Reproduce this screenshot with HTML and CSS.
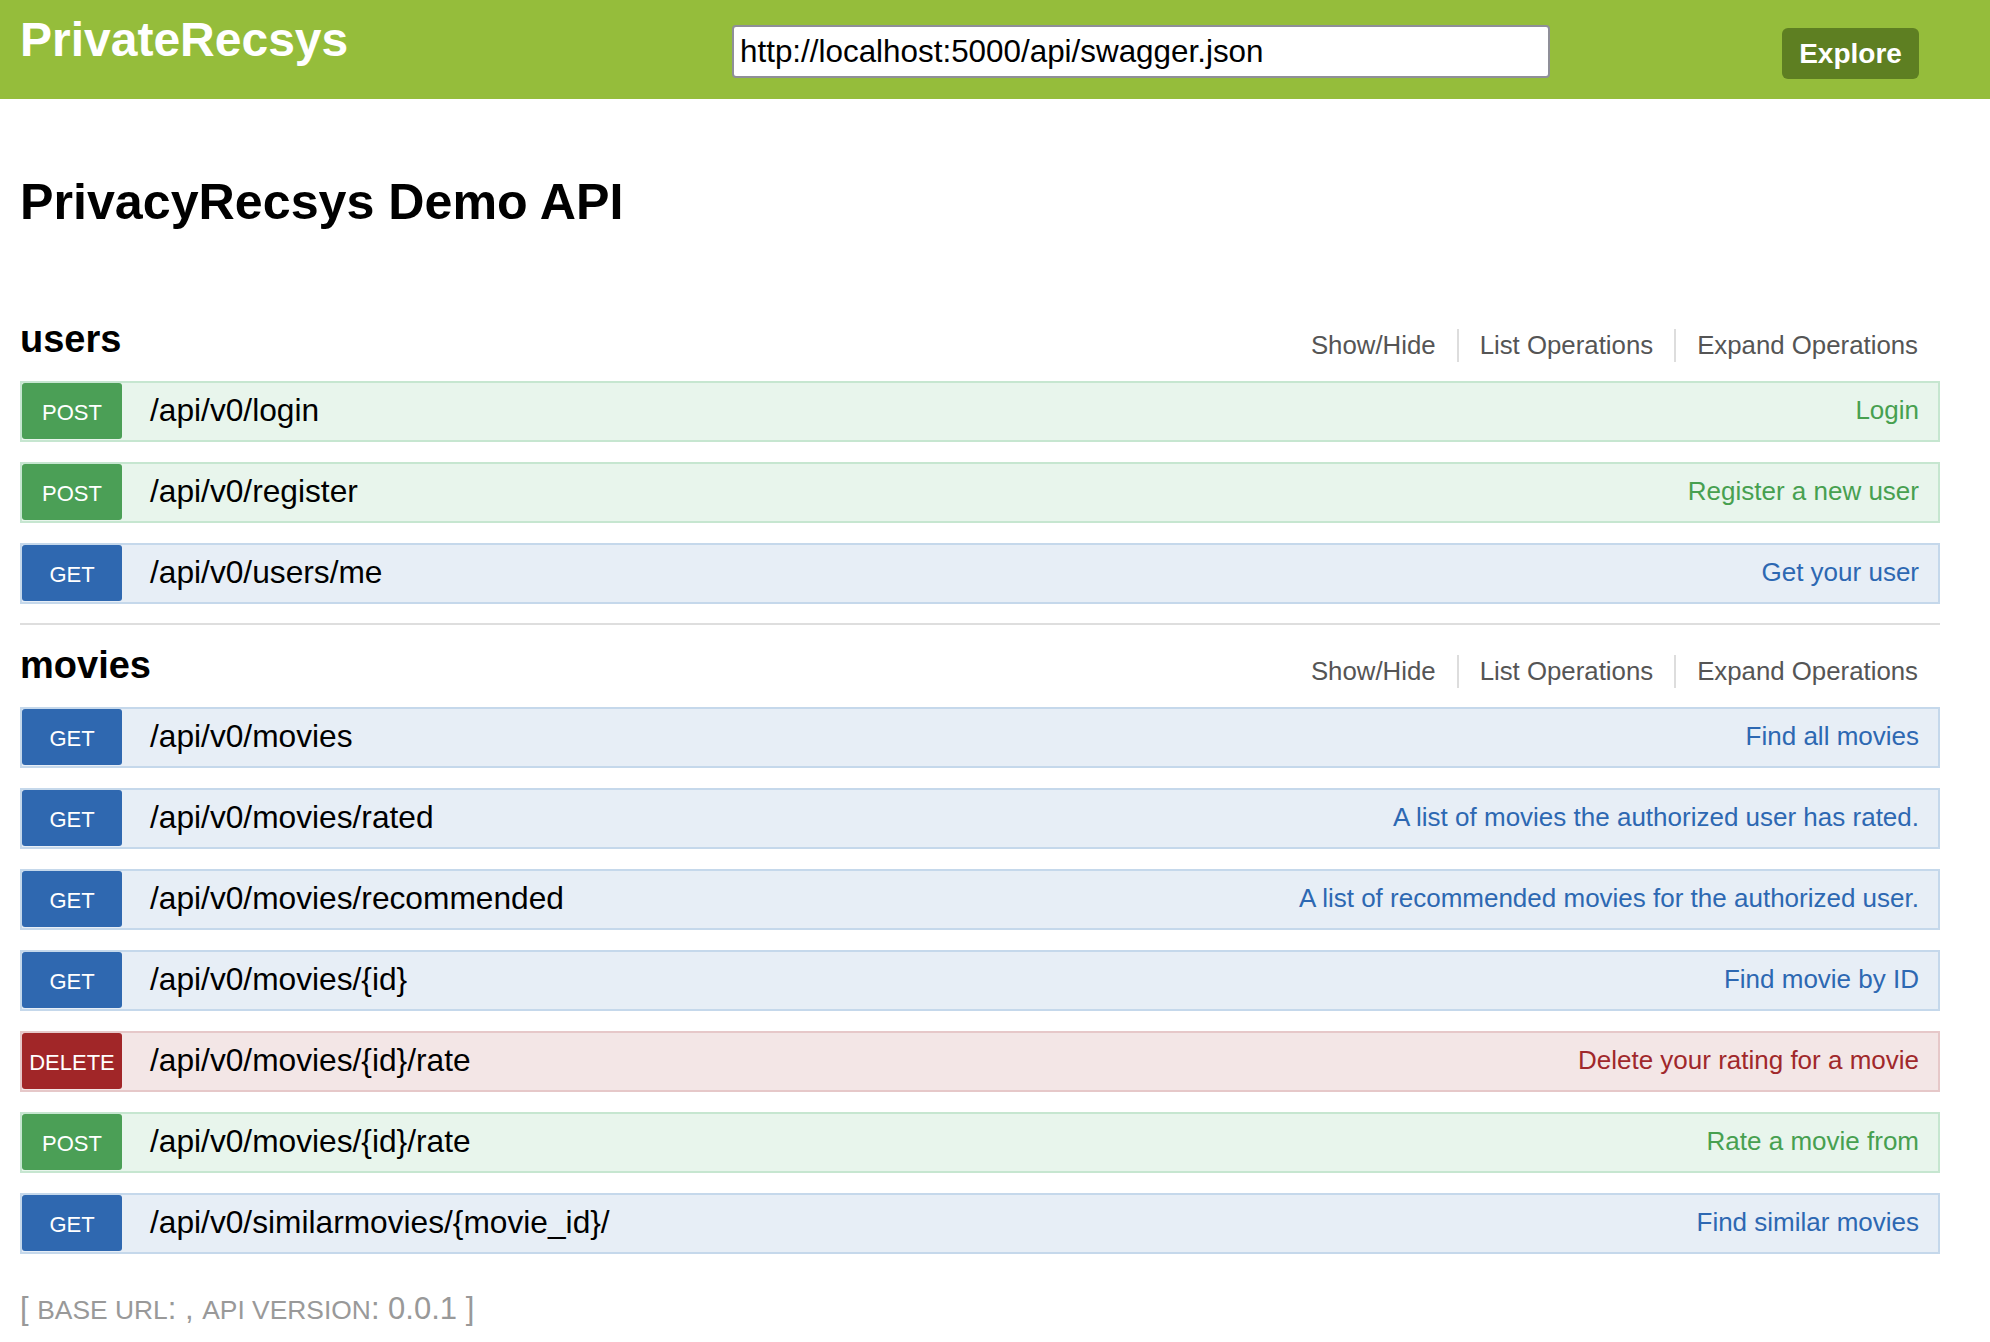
FILE: index.html
```html
<!DOCTYPE html>
<html lang="en">
<head>
<meta charset="utf-8">
<title>PrivacyRecsys Demo API</title>
<link rel="stylesheet" href="styles.css">
</head>
<body>
<header class="topbar">
  <div class="topbar-inner">
    <a class="logo">PrivateRecsys</a>
    <form class="api-selector">
      <input class="api-url" type="text" value="http://localhost:5000/api/swagger.json">
      <a class="explore">Explore</a>
    </form>
  </div>
</header>
<main class="wrap">
  <h1 class="api-title">PrivacyRecsys Demo API</h1>

  <section class="resource">
    <div class="resource-head">
      <h2 class="resource-name">users</h2>
      <ul class="options">
        <li>Show/Hide</li>
        <li>List Operations</li>
        <li>Expand Operations</li>
      </ul>
    </div>
    <ul class="ops">
      <li class="op post"><span class="method">POST</span><span class="path">/api/v0/login</span><span class="summary">Login</span></li>
      <li class="op post"><span class="method">POST</span><span class="path">/api/v0/register</span><span class="summary">Register a new user</span></li>
      <li class="op get"><span class="method">GET</span><span class="path">/api/v0/users/me</span><span class="summary">Get your user</span></li>
    </ul>
  </section>

  <section class="resource">
    <div class="resource-head">
      <h2 class="resource-name">movies</h2>
      <ul class="options">
        <li>Show/Hide</li>
        <li>List Operations</li>
        <li>Expand Operations</li>
      </ul>
    </div>
    <ul class="ops">
      <li class="op get"><span class="method">GET</span><span class="path">/api/v0/movies</span><span class="summary">Find all movies</span></li>
      <li class="op get"><span class="method">GET</span><span class="path">/api/v0/movies/rated</span><span class="summary">A list of movies the authorized user has rated.</span></li>
      <li class="op get"><span class="method">GET</span><span class="path">/api/v0/movies/recommended</span><span class="summary">A list of recommended movies for the authorized user.</span></li>
      <li class="op get"><span class="method">GET</span><span class="path">/api/v0/movies/{id}</span><span class="summary">Find movie by ID</span></li>
      <li class="op delete"><span class="method">DELETE</span><span class="path">/api/v0/movies/{id}/rate</span><span class="summary">Delete your rating for a movie</span></li>
      <li class="op post"><span class="method">POST</span><span class="path">/api/v0/movies/{id}/rate</span><span class="summary">Rate a movie from</span></li>
      <li class="op get"><span class="method">GET</span><span class="path">/api/v0/similarmovies/{movie_id}/</span><span class="summary">Find similar movies</span></li>
    </ul>
  </section>

  <h4 class="footer">[ <span class="sc">base url</span>: , <span class="sc">api version</span>: 0.0.1 ]</h4>
</main>
</body>
</html>
```
FILE: styles.css
```css
* { box-sizing: border-box; }

body {
  margin: 0;
  font-family: "Liberation Sans", Arial, Helvetica, sans-serif;
  color: #000;
  background: #fff;
}

/* ---------- top bar ---------- */
.topbar {
  background: #95bd3b;
  height: 99px;
}
.topbar-inner {
  margin-left: 20px;
  width: 1920px;
  display: flex;
  align-items: flex-start;
}
.logo {
  margin-top: 16px;
  font-size: 48px;
  line-height: 48px;
  font-weight: bold;
  color: #fff;
}
.api-selector {
  margin: 0 0 0 auto;
  display: flex;
  align-items: flex-start;
}
.api-url {
  margin-top: 25px;
  width: 818px;
  height: 53px;
  border: 2px solid #8f8f98;
  border-radius: 4px;
  padding: 0 6px;
  font-family: "Liberation Sans", Arial, sans-serif;
  font-size: 31.4px;
  color: #000;
  background: #fff;
}
.explore {
  margin-top: 28px;
  margin-left: 232px;
  margin-right: 21px;
  width: 137px;
  height: 51px;
  background: #5e7f22;
  border-radius: 6px;
  color: #fff;
  font-weight: bold;
  font-size: 28px;
  display: flex;
  align-items: center;
  justify-content: center;
}

/* ---------- content ---------- */
.wrap {
  margin-left: 20px;
  width: 1920px;
}
.api-title {
  margin: 73px 0 0;
  font-size: 50.2px;
  line-height: 60px;
  font-weight: bold;
}
.resource {
  margin-top: 85px;
}
.resource + .resource {
  margin-top: 19px;
  padding-top: 18px;
  border-top: 2px solid #dedede;
}
.resource-head {
  display: flex;
  align-items: flex-start;
  justify-content: space-between;
  height: 44px;
}
.resource-name {
  margin: 0;
  font-size: 38px;
  line-height: 44px;
  font-weight: bold;
}
.options {
  list-style: none;
  margin: 12px 0 0;
  padding: 0;
  display: flex;
}
.options li {
  font-size: 25.8px;
  line-height: 33px;
  padding: 0 21px;
  color: #555;
}
.options li:last-child {
  padding-right: 22px;
}
.options li + li {
  border-left: 2px solid #dddddd;
}

.ops {
  list-style: none;
  margin: 0;
  padding: 0;
}
.op {
  margin-top: 20px;
  height: 61px;
  border: 2px solid;
  display: flex;
  align-items: center;
}
.method {
  align-self: flex-start;
  width: 100px;
  height: 56px;
  padding-top: 3px;
  border-radius: 3px;
  color: #fff;
  font-size: 22px;
  display: flex;
  align-items: center;
  justify-content: center;
}
.path {
  margin-left: 28px;
  font-size: 31.7px;
  color: #000;
  margin-top: -2px;
}
.summary {
  margin-left: auto;
  padding-right: 19px;
  font-size: 26px;
  margin-top: -2px;
}

.op.post { background: #e8f5ec; border-color: #c6e6d0; }
.op.post .method { background: #4b9f56; }
.op.post .summary { color: #47a050; }

.op.get { background: #e7eef6; border-color: #c5d8eb; }
.op.get .method { background: #2f68b0; }
.op.get .summary { color: #2d68b2; }

.op.delete { background: #f3e6e6; border-color: #e6c8c9; }
.op.delete .method { background: #a12628; }
.op.delete .summary { color: #a0282b; }

/* ---------- footer ---------- */
.footer {
  margin: 37px 0 0;
  font-size: 31px;
  line-height: 36px;
  font-weight: normal;
  color: #999;
}
.sc {
  text-transform: uppercase;
  font-size: 26.4px;
}
```
